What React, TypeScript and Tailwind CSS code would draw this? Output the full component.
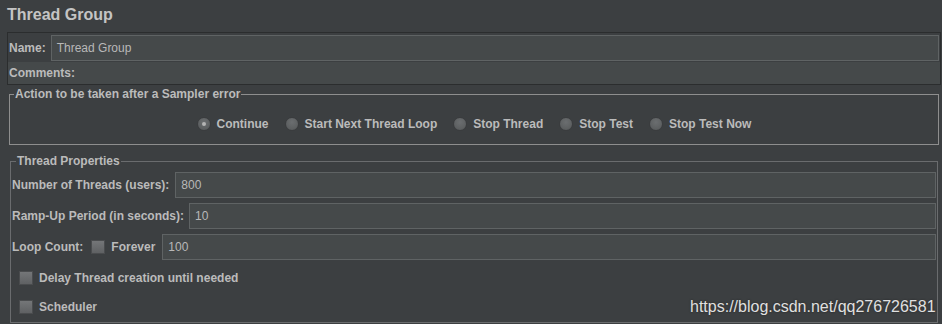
import React from "react";

function Radio({ checked }: { checked?: boolean }) {
  return (
    <span className="w-[14px] h-[14px] rounded-full border border-[#3a3c3e] bg-[radial-gradient(circle_at_50%_35%,#6b6e70,#555859)] flex items-center justify-center shrink-0">
      {checked && <span className="w-[4px] h-[4px] rounded-full bg-[#b4b4b4]" />}
    </span>
  );
}

function Check() {
  return (
    <span className="block w-[14px] h-[14px] border border-[#4a4c4e] bg-[linear-gradient(#747678,#5f6163)] shrink-0" />
  );
}

function Input({ value }: { value: string }) {
  return (
    <div className="flex-1 h-[26px] border border-[#5f6364] bg-[#45494a] pl-[5px] flex items-center text-[12px] font-normal text-[#b8b8b8]">
      {value}
    </div>
  );
}

export default function App() {
  const radios = [
    { label: "Continue", checked: true },
    { label: "Start Next Thread Loop" },
    { label: "Stop Thread" },
    { label: "Stop Test" },
    { label: "Stop Test Now" },
  ];
  return (
    <div className="relative w-[942px] h-[324px] bg-[#3c3f41] overflow-hidden font-['Liberation_Sans',Arial,sans-serif] text-[#bbbbbb] text-[12px]">
      <div className="h-[32px] pl-[7px] pt-[5px] text-[16px] leading-[20px] font-bold text-[#c4c4c4]">Thread Group</div>

      <div className="ml-[7px] mr-[1px] border border-[#2b2d2e]">
        <div className="flex items-center pt-[2px] pb-[1px] pr-[1px] gap-[5px]">
          <span className="font-bold pl-[1px]">Name:</span>
          <Input value="Thread Group" />
        </div>
        <div className="h-[22px] bg-[#45494a] flex items-center pl-[1px] font-bold">Comments:</div>
      </div>

      <fieldset className="mt-[2px] ml-[9px] w-[930px] border border-[#8e8e8e] pb-[12px]">
        <legend className="ml-[4px] px-[1px] font-bold leading-[14px]">Action to be taken after a Sampler error</legend>
        <div className="pt-[15px] flex justify-center items-center h-[31px] font-bold">
          {radios.map((r, i) => (
            <div key={r.label} className={`flex items-center gap-[6px] ${i > 0 ? "ml-[16px]" : ""}`}>
              <Radio checked={r.checked} />
              <span>{r.label}</span>
            </div>
          ))}
        </div>
      </fieldset>

      <fieldset className="mt-[9px] ml-[10px] w-[928px] h-[169px] border border-[#6a6c6e] font-bold">
        <legend className="ml-[5px] px-[1px] leading-[14px]">Thread Properties</legend>
        <div className="pt-[4px] pl-[1px] pr-[1px] flex flex-col">
          <div className="flex items-center gap-[6px]">
            <span>Number of Threads (users):</span>
            <Input value="800" />
          </div>
          <div className="flex items-center gap-[5px] mt-[5px]">
            <span>Ramp-Up Period (in seconds):</span>
            <Input value="10" />
          </div>
          <div className="flex items-center mt-[5px]">
            <span>Loop Count:</span>
            <span className="ml-[8px] flex"><Check /></span>
            <span className="ml-[6px]">Forever</span>
            <span className="w-[7px]" />
            <Input value="100" />
          </div>
          <div className="flex items-center h-[22px] mt-[7px] pl-[7px] gap-[6px]">
            <Check />
            <span>Delay Thread creation until needed</span>
          </div>
          <div className="flex items-center h-[22px] mt-[7px] pl-[7px] gap-[6px]">
            <Check />
            <span>Scheduler</span>
          </div>
        </div>
      </fieldset>

      <div className="absolute left-[690px] top-[296px] text-[16px] leading-[22px] font-normal text-[#e0e0e0] [text-shadow:0_0_2px_#222]">
        https://blog.csdn.net/qq276726581
      </div>
    </div>
  );
}
